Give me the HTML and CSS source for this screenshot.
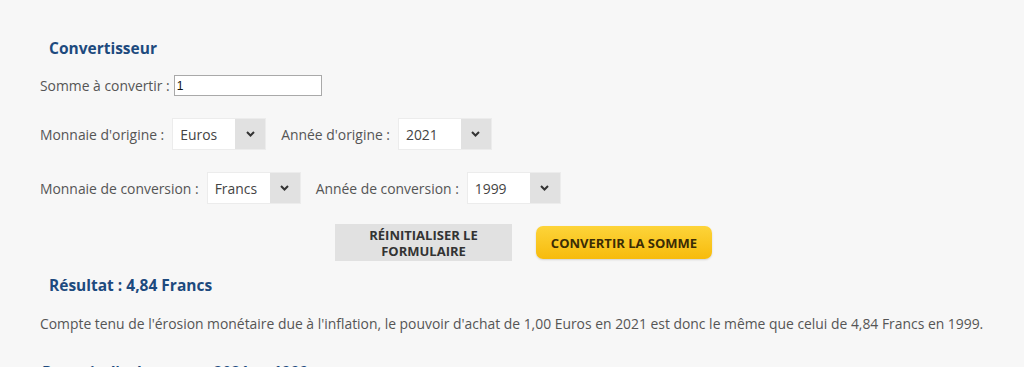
FILE: index.html
```html
<!DOCTYPE html>
<html lang="fr">
<head>
    <meta charset="UTF-8">
    <meta name="viewport" content="width=device-width, initial-scale=1.0">
    <title>Convertisseur</title>
    <link rel="stylesheet" href="styles.css">
</head>
<body>

    <div class="converter">
        <h2 class="title">Convertisseur</h2>

        <form class="form">
            <div class="row row-amount">
                <label for="somme">Somme à convertir :</label>
                <input type="text" id="somme" class="amount" value="1">
            </div>

            <div class="row">
                <label for="monnaie1">Monnaie d'origine :</label>
                <div class="select">
                    <select id="monnaie1"><option>Euros</option><option>Francs</option></select>
                    <span class="arrow"><svg width="9" height="6" viewBox="0 0 9 6"><path d="M1 1 L4.5 4.5 L8 1" fill="none" stroke="#333" stroke-width="2"/></svg></span>
                </div>
                <label for="annee1">Année d'origine :</label>
                <div class="select">
                    <select id="annee1"><option>2021</option></select>
                    <span class="arrow"><svg width="9" height="6" viewBox="0 0 9 6"><path d="M1 1 L4.5 4.5 L8 1" fill="none" stroke="#333" stroke-width="2"/></svg></span>
                </div>
            </div>

            <div class="row">
                <label for="monnaie2">Monnaie de conversion :</label>
                <div class="select">
                    <select id="monnaie2"><option>Francs</option><option>Euros</option></select>
                    <span class="arrow"><svg width="9" height="6" viewBox="0 0 9 6"><path d="M1 1 L4.5 4.5 L8 1" fill="none" stroke="#333" stroke-width="2"/></svg></span>
                </div>
                <label for="annee2">Année de conversion :</label>
                <div class="select">
                    <select id="annee2"><option>1999</option></select>
                    <span class="arrow"><svg width="9" height="6" viewBox="0 0 9 6"><path d="M1 1 L4.5 4.5 L8 1" fill="none" stroke="#333" stroke-width="2"/></svg></span>
                </div>
            </div>

            <div class="buttons">
                <button type="reset" class="btn-reset">Réinitialiser le formulaire</button>
                <button type="button" class="btn-convert">Convertir la somme</button>
            </div>
        </form>

        <h2 class="title result">Résultat : 4,84 Francs</h2>
        <p class="explain">Compte tenu de l'érosion monétaire due à l'inflation, le pouvoir d'achat de 1,00 Euros en 2021 est donc le même que celui de 4,84 Francs en 1999.</p>

        <h2 class="title next">Pouvoir d'achat entre 2021 et 1999</h2>
    </div>

</body>
</html>
```

FILE: styles.css
```css
body {
    margin: 0;
    background-color: #f7f7f7;
    font-family: "Open Sans", sans-serif;
    color: #555;
    font-size: 13.9px;
}
.converter {
    padding: 38px 17px 0 40px;
}
.title {
    margin: 0;
    padding-left: 9px;
    font-size: 15.5px;
    line-height: 20px;
    font-weight: bold;
    color: #1d4a7e;
}
.row {
    display: flex;
    align-items: center;
    height: 32px;
    margin-top: 19px;
}
.row-amount {
    height: 21px;
    margin-top: 17px;
}
.row + .row {
    margin-top: 22px;
}
label {
    margin-right: 8px;
}
.amount {
    width: 142px;
    height: 15px;
    padding: 2px 2px;
    margin: 0 0 0 -4px;
    border: 1px solid #a9a9a9;
    font-family: "Liberation Sans", sans-serif;
    font-size: 12px;
    color: #111;
    background: #fff;
}
.select {
    display: flex;
    width: 94px;
    height: 32px;
    margin-right: 15px;
    box-sizing: border-box;
    border: 1px solid #ececec;
}
.select select {
    appearance: none;
    -webkit-appearance: none;
    width: 62px;
    height: 30px;
    border: 0;
    padding: 0 0 0 7px;
    background: #fff;
    font-family: "Open Sans", sans-serif;
    font-size: 13.9px;
    color: #444;
}
.arrow {
    width: 30px;
    display: flex;
    align-items: center;
    justify-content: center;
    background-color: #e1e1e1;
}
.buttons {
    display: flex;
    align-items: center;
    justify-content: center;
    gap: 24px;
    margin-top: 20px;
}
.btn-reset {
    width: 177px;
    height: 37px;
    border: 0;
    background-color: #e1e1e1;
    font-family: "Open Sans", sans-serif;
    font-weight: bold;
    font-size: 13px;
    line-height: 16px;
    text-transform: uppercase;
    color: #333;
    padding: 0 20px;
}
.btn-convert {
    width: 176px;
    height: 33px;
    border: 0;
    border-radius: 7px;
    background: linear-gradient(#fdd43a, #f7bb0c);
    box-shadow: 0 1px 2px rgba(0,0,0,0.15);
    font-family: "Open Sans", sans-serif;
    font-weight: bold;
    font-size: 13px;
    text-transform: uppercase;
    color: #3b2c05;
}
.result {
    margin-top: 14px;
}
.explain {
    margin: 19px 0 0;
    line-height: 20px;
}
.next {
    margin-top: 28px;
    padding-left: 2px;
}
```
